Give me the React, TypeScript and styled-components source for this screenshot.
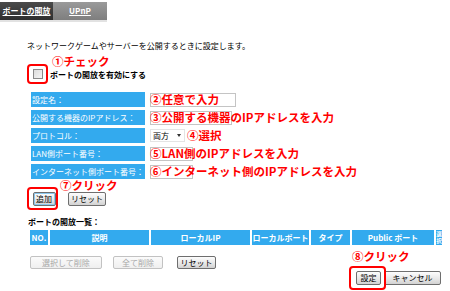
import React from 'react';
import styled, { createGlobalStyle, css } from 'styled-components';

const BLUE = '#33aaee';
const RED = '#ff0000';

const GlobalStyle = createGlobalStyle`
  html, body {
    margin: 0;
    padding: 0;
    background: #fff;
  }
  body {
    font-family: "Noto Sans CJK JP", "Liberation Sans", sans-serif;
    font-size: 8px;
    color: #000;
  }
`;

const Page = styled.div`
  width: 450px;
  height: 291px;
  overflow: hidden;
`;

const TabStrip = styled.div`
  display: inline-flex;
  margin-top: 2px;
  border-bottom: 2px solid #e2e2e2;
`;

const Tab = styled.div<{ $active?: boolean }>`
  height: 18px;
  line-height: 18px;
  width: ${(p) => (p.$active ? 53 : 54)}px;
  text-align: center;
  color: #fff;
  font-weight: bold;
  text-decoration: underline;
  background: ${(p) =>
    p.$active
      ? 'linear-gradient(#4a4a4a, #2e2e2e)'
      : 'linear-gradient(#9a9a9a, #7e7e7e)'};
`;

const Content = styled.div`
  padding-left: 27px;
`;

const Intro = styled.div`
  margin-top: 19px;
  line-height: 10px;
  white-space: nowrap;
`;

const Note = styled.span<{ $left: number; $top: number }>`
  position: absolute;
  left: ${(p) => p.$left}px;
  top: ${(p) => p.$top}px;
  color: ${RED};
  font-size: 11.5px;
  font-weight: bold;
  line-height: 12px;
  white-space: nowrap;
`;

const Highlight = styled.div<{ $w: number; $h: number }>`
  position: relative;
  box-sizing: border-box;
  width: ${(p) => p.$w}px;
  height: ${(p) => p.$h}px;
  border: 2px solid ${RED};
  border-radius: 4px;
  display: flex;
  align-items: center;
  justify-content: center;
  flex-shrink: 0;
`;

const EnableRow = styled.div`
  display: flex;
  align-items: center;
  gap: 2px;
  margin-top: 13px;
`;

const CheckBox = styled.span`
  display: block;
  box-sizing: border-box;
  width: 10px;
  height: 10px;
  border: 1px solid #8a8a8a;
  background: linear-gradient(135deg, #dcdcdc, #f6f6f6);
`;

const BoldLabel = styled.span`
  font-weight: bold;
  white-space: nowrap;
`;

const Form = styled.div`
  display: grid;
  grid-template-columns: 114px 1fr;
  grid-auto-rows: 15px;
  column-gap: 5px;
  row-gap: 3px;
  margin: 8px 0 0 4px;
`;

const FieldLabel = styled.div`
  background: ${BLUE};
  color: #fff;
  line-height: 15px;
  padding-left: 1px;
  white-space: nowrap;
  overflow: hidden;
`;

const Field = styled.div`
  position: relative;
  display: flex;
  align-items: center;
`;

const TextBox = styled.input<{ $w: number }>`
  box-sizing: border-box;
  width: ${(p) => p.$w}px;
  height: 14px;
  margin: 0;
  padding: 0 2px;
  border: 1px solid #c4c4c4;
  background: #fff;
  font: inherit;
`;

const Select = styled.div`
  box-sizing: border-box;
  width: 35px;
  height: 13px;
  border: 1px solid #e4e4e4;
  display: flex;
  align-items: center;
  justify-content: space-between;
  padding: 0 3px 0 2px;
  font-size: 8px;
`;

const Caret = styled.span`
  width: 0;
  height: 0;
  border-left: 2.5px solid transparent;
  border-right: 2.5px solid transparent;
  border-top: 3px solid #333;
`;

const ButtonRow = styled.div<{ $gap: number }>`
  display: flex;
  align-items: center;
  gap: ${(p) => p.$gap}px;
`;

const AddRow = styled(ButtonRow)`
  margin-top: 8px;
`;

const Button = styled.button<{ $w: number; $h?: number; $focus?: boolean }>`
  box-sizing: border-box;
  width: ${(p) => p.$w}px;
  height: ${(p) => p.$h ?? 14}px;
  margin: 0;
  padding: 0;
  border: 1px solid #6e6e6e;
  border-radius: 2px;
  background: linear-gradient(#fdfdfd, #e6e6e6 60%, #d2d2d2);
  font-family: inherit;
  font-size: 8px;
  line-height: 1;
  color: #000;
  white-space: nowrap;
  ${(p) =>
    p.$focus &&
    css`
      box-shadow: inset 0 0 0 1px #8cc8ee;
    `}
  &:disabled {
    border-color: #c2c2c2;
    color: #a8a8a8;
    background: linear-gradient(#fbfbfb, #efefef);
  }
`;

const ListTitle = styled.div`
  margin: 7px 0 0 1px;
  line-height: 10px;
  font-weight: bold;
`;

const TableHead = styled.div`
  display: grid;
  grid-template-columns: 18px 99px 99px 57px 39px 82px 6px;
  column-gap: 2px;
  height: 15px;
  margin: 3px 0 0 3px;
`;

const HeadCell = styled.div<{ $tiny?: boolean }>`
  background: ${BLUE};
  color: #fff;
  font-weight: bold;
  display: flex;
  align-items: center;
  justify-content: center;
  white-space: nowrap;
  overflow: hidden;
  ${(p) =>
    p.$tiny &&
    css`
      flex-direction: column;
      font-size: 5.5px;
      line-height: 7px;
    `}
`;

const DeleteRow = styled(ButtonRow)`
  margin: 11px 0 0 3px;
`;

const Footer = styled.div`
  display: flex;
  justify-content: flex-end;
  gap: 3px;
  margin-top: 2px;
  padding-right: 9px;
`;

const Marked = styled.div`
  position: relative;
  &::after {
    content: '';
    position: absolute;
    left: -7px;
    right: -5px;
    top: -5px;
    bottom: -5px;
    border: 2px solid ${RED};
    border-radius: 4px;
  }
`;

const fields = [
  { label: '設定名：', note: '②任意で入力', width: 86 },
  { label: '公開する機器のIPアドレス：', note: '③公開する機器のIPアドレスを入力', width: 82 },
  { label: 'プロトコル：', note: '④選択', width: 0 },
  { label: 'LAN側ポート番号：', note: '⑤LAN側のIPアドレスを入力', width: 43 },
  { label: 'インターネット側ポート番号：', note: '⑥インターネット側のIPアドレスを入力', width: 43 },
];

const columns = ['NO.', '説明', 'ローカルIP', 'ローカルポート', 'タイプ', 'Public ポート'];

export default function App() {
  return (
    <Page>
      <GlobalStyle />
      <TabStrip>
        <Tab $active>ポートの開放</Tab>
        <Tab>UPnP</Tab>
      </TabStrip>

      <Content>
        <Intro>ネットワークゲームやサーバーを公開するときに設定します。</Intro>

        <EnableRow>
          <Highlight $w={21} $h={20}>
            <CheckBox />
            <Note $left={23} $top={-11}>①チェック</Note>
          </Highlight>
          <BoldLabel>ポートの開放を有効にする</BoldLabel>
        </EnableRow>

        <Form>
          {fields.map((f) => (
            <React.Fragment key={f.label}>
              <FieldLabel>{f.label}</FieldLabel>
              <Field>
                {f.width > 0 ? (
                  <TextBox $w={f.width} />
                ) : (
                  <Select>
                    両方
                    <Caret />
                  </Select>
                )}
                <Note $left={f.width > 0 ? 0 : 37} $top={1}>
                  {f.note}
                </Note>
              </Field>
            </React.Fragment>
          ))}
        </Form>

        <AddRow $gap={10}>
          <Highlight $w={31} $h={23}>
            <Button $w={23} $focus style={{ marginLeft: 3 }}>
              追加
            </Button>
            <Note $left={31} $top={-10}>⑦クリック</Note>
          </Highlight>
          <Button $w={38}>リセット</Button>
        </AddRow>

        <ListTitle>ポートの開放一覧：</ListTitle>

        <TableHead>
          {columns.map((c) => (
            <HeadCell key={c}>{c}</HeadCell>
          ))}
          <HeadCell $tiny>
            <span>選</span>
            <span>択</span>
          </HeadCell>
        </TableHead>

        <DeleteRow $gap={11}>
          <Button $w={72} $h={13} disabled>
            選択して削除
          </Button>
          <Button $w={50} $h={13} disabled>
            全て削除
          </Button>
          <Button $w={39} $h={13} style={{ marginLeft: 3 }}>
            リセット
          </Button>
        </DeleteRow>
      </Content>

      <Footer>
        <Marked>
          <Button $w={25}>設定</Button>
          <Note $left={-4} $top={-21}>⑧クリック</Note>
        </Marked>
        <Button $w={57}>キャンセル</Button>
      </Footer>
    </Page>
  );
}
